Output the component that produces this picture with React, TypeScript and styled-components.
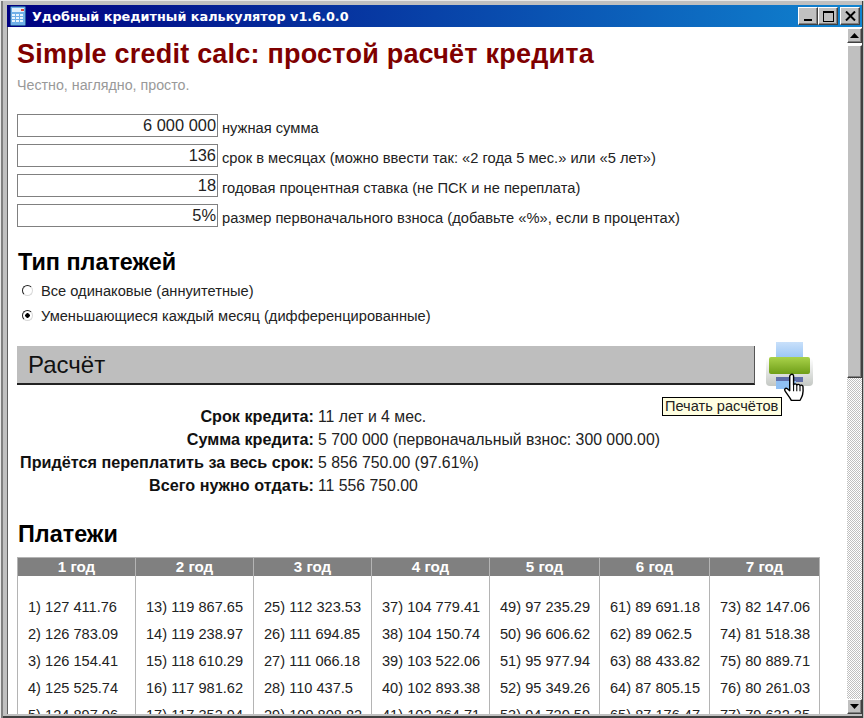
import React from "react"
import styled, { createGlobalStyle } from "styled-components"

const years = [
    { title: "1 год", items: ["1) 127 411.76", "2) 126 783.09", "3) 126 154.41", "4) 125 525.74", "5) 124 897.06"] },
    { title: "2 год", items: ["13) 119 867.65", "14) 119 238.97", "15) 118 610.29", "16) 117 981.62", "17) 117 352.94"] },
    { title: "3 год", items: ["25) 112 323.53", "26) 111 694.85", "27) 111 066.18", "28) 110 437.5", "29) 109 808.82"] },
    { title: "4 год", items: ["37) 104 779.41", "38) 104 150.74", "39) 103 522.06", "40) 102 893.38", "41) 102 264.71"] },
    { title: "5 год", items: ["49) 97 235.29", "50) 96 606.62", "51) 95 977.94", "52) 95 349.26", "53) 94 720.59"] },
    { title: "6 год", items: ["61) 89 691.18", "62) 89 062.5", "63) 88 433.82", "64) 87 805.15", "65) 87 176.47"] },
    { title: "7 год", items: ["73) 82 147.06", "74) 81 518.38", "75) 80 889.71", "76) 80 261.03", "77) 79 632.35"] },
]

const fields = [
    { value: "6 000 000", label: "нужная сумма" },
    { value: "136", label: "срок в месяцах (можно ввести так: «2 года 5 мес.» или «5 лет»)" },
    { value: "18", label: "годовая процентная ставка (не ПСК и не переплата)" },
    { value: "5%", label: "размер первоначального взноса (добавьте «%», если в процентах)" },
]

const summary = [
    { name: "Срок кредита:", value: "11 лет и 4 мес." },
    { name: "Сумма кредита:", value: "5 700 000 (первоначальный взнос: 300 000.00)" },
    { name: "Придётся переплатить за весь срок:", value: "5 856 750.00 (97.61%)" },
    { name: "Всего нужно отдать:", value: "11 556 750.00" },
]

const CalcIcon = () => (
    <svg width="16" height="20" viewBox="0 0 16 20">
        <rect x="0.5" y="0.5" width="15" height="19" rx="1" fill="#6fb0e8" stroke="#2a5f9e" />
        <rect x="2" y="2" width="12" height="4" fill="#dff0fb" />
        <rect x="11" y="3" width="3" height="2" fill="#e04a3a" />
        {[8, 11, 14].map(y => [2, 6, 10].map(x => <rect key={`${x}-${y}`} x={x} y={y} width="3" height="2" fill="#e8f4fc" />))}
    </svg>
)

const PrinterIcon = () => (
    <svg width="50" height="58" viewBox="0 0 50 58">
        <defs>
            <linearGradient id="paper" x1="0" y1="0" x2="0" y2="1">
                <stop offset="0" stopColor="#c9e0fa" />
                <stop offset="1" stopColor="#8fc0f4" />
            </linearGradient>
            <linearGradient id="body" x1="0" y1="0" x2="0" y2="1">
                <stop offset="0" stopColor="#ffffff" />
                <stop offset="1" stopColor="#c4c8c4" />
            </linearGradient>
            <linearGradient id="lid" x1="0" y1="0" x2="0" y2="1">
                <stop offset="0" stopColor="#a9d24a" />
                <stop offset="1" stopColor="#6f9e18" />
            </linearGradient>
        </defs>
        <rect x="12" y="1" width="27" height="20" fill="url(#paper)" />
        <rect x="2" y="17" width="47" height="28" rx="4" fill="url(#body)" />
        <rect x="5" y="16" width="41" height="17" rx="2" fill="url(#lid)" />
        <rect x="12" y="36" width="27" height="5" fill="#5f6ea8" />
        <rect x="12" y="40" width="20" height="8" fill="#8fc0f4" />
    </svg>
)

const HandCursor = () => (
    <svg width="22" height="30" viewBox="0 0 20 28">
        <path
            d="M7 1.500c1.200-.8 2.600 0 2.600 1.400v8.200c.4-1.200 2.600-1.300 3 .2.500-1 2.600-1 3 .5.700-.8 2.600-.5 2.800 1 .2 2.300.2 5-.4 7.500-.5 2-1.500 3.500-2.300 5.200H7.500C6 22.500 3 19 1.500 16.500c-.8-1.400.6-2.900 2-2l2.500 2V3c0-.6.400-1.200 1-1.500z"
            fill="#fff"
            stroke="#000"
            strokeWidth="1.300"
            strokeLinejoin="round"
        />
        <path d="M9.600 11v6M12.600 11.500V17M15.600 12v5" stroke="#000" strokeWidth="1" fill="none" />
    </svg>
)

const App = () => {
    return (
        <>
            <GlobalStyle />
            <Frame>
                <TitleBar>
                    <CalcIcon />
                    <TitleText>Удобный кредитный калькулятор v1.6.0.0</TitleText>
                    <Controls>
                        <ControlButton><MinGlyph /></ControlButton>
                        <ControlButton><MaxGlyph /></ControlButton>
                        <CloseButton>
                            <svg width="11" height="10" viewBox="0 0 11 10">
                                <path d="M1 0.500l9 9M10 0.500l-9 9" stroke="#000" strokeWidth="2" />
                            </svg>
                        </CloseButton>
                    </Controls>
                </TitleBar>
                <Body>
                    <Content>
                        <MainTitle>Simple credit calc: простой расчёт кредита</MainTitle>
                        <Tagline>Честно, наглядно, просто.</Tagline>
                        <Fields>
                            {fields.map(f => (
                                <FieldRow key={f.label}>
                                    <ValueBox>{f.value}</ValueBox>
                                    <FieldLabel>{f.label}</FieldLabel>
                                </FieldRow>
                            ))}
                        </Fields>
                        <SectionTitle>Тип платежей</SectionTitle>
                        <RadioGroup>
                            <RadioRow>
                                <RadioDot />
                                Все одинаковые (аннуитетные)
                            </RadioRow>
                            <RadioRow>
                                <RadioDot $checked />
                                Уменьшающиеся каждый месяц (дифференцированные)
                            </RadioRow>
                        </RadioGroup>
                        <ResultHead>
                            <ResultBar>Расчёт</ResultBar>
                            <PrintBox>
                                <PrinterIcon />
                                <CursorSpot><HandCursor /></CursorSpot>
                                <Tooltip>Печать расчётов</Tooltip>
                            </PrintBox>
                        </ResultHead>
                        <Summary>
                            {summary.map(s => (
                                <React.Fragment key={s.name}>
                                    <SummaryName>{s.name}</SummaryName>
                                    <SummaryValue>{s.value}</SummaryValue>
                                </React.Fragment>
                            ))}
                        </Summary>
                        <PaymentsTitle>Платежи</PaymentsTitle>
                        <Payments>
                            {years.map(y => (
                                <YearColumn key={y.title}>
                                    <YearHead>{y.title}</YearHead>
                                    <YearList>
                                        {y.items.map(i => <PayItem key={i}>{i}</PayItem>)}
                                    </YearList>
                                </YearColumn>
                            ))}
                        </Payments>
                    </Content>
                    <Scrollbar>
                        <ScrollButton>
                            <svg width="9" height="5" viewBox="0 0 9 5"><path d="M4.500 0L9 5H0z" fill="#000" /></svg>
                        </ScrollButton>
                        <ScrollThumb />
                        <ScrollTrack />
                        <ScrollButton>
                            <svg width="9" height="5" viewBox="0 0 9 5"><path d="M0 0h9L4.500 5z" fill="#000" /></svg>
                        </ScrollButton>
                    </Scrollbar>
                </Body>
            </Frame>
        </>
    )
}

const GlobalStyle = createGlobalStyle`
    html, body {
        margin: 0;
        padding: 0;
        height: 718px;
        overflow: hidden;
        background: #c0c0c0;
    }
    body {
        font-family: "Liberation Sans", Arial, sans-serif;
    }
`
const Frame = styled.div`
    box-sizing: border-box;
    width: 864px;
    height: 718px;
    display: flex;
    flex-direction: column;
    background: #c0c0c0;
    padding: 4px 2px 4px 6px;
    border-top: 1px solid #e8e8e8;
    border-left: 1px solid #e8e8e8;
    box-shadow: inset 2px 0 0 #808080, inset -1px 0 0 #c0c0c0, inset -2px 0 0 #404040, inset 0 -2px 0 #404040;
`
const TitleBar = styled.div`
    height: 22px;
    flex: none;
    display: flex;
    align-items: center;
    gap: 6px;
    padding: 0 2px 0 3px;
    background: linear-gradient(90deg, #000080 0%, #1084d0 100%);
`
const TitleText = styled.div`
    color: #fff;
    font-family: "DejaVu Sans", Verdana, sans-serif;
    font-size: 12.8px;
    font-weight: bold;
`
const Controls = styled.div`
    margin-left: auto;
    display: flex;
`
const ControlButton = styled.div`
    box-sizing: border-box;
    width: 20px;
    height: 18px;
    display: flex;
    align-items: center;
    justify-content: center;
    background: #c0c0c0;
    border: 1px solid;
    border-color: #fff #404040 #404040 #fff;
    box-shadow: inset -1px -1px 0 #808080;
`
const CloseButton = styled(ControlButton)`
    margin-left: 2px;
`
const MinGlyph = styled.div`
    width: 8px;
    height: 2px;
    background: #000;
    margin-top: 8px;
`
const MaxGlyph = styled.div`
    box-sizing: border-box;
    width: 11px;
    height: 11px;
    border: 1px solid #000;
    border-top-width: 2px;
`
const Body = styled.div`
    flex: 1;
    min-height: 0;
    display: flex;
    background: #fff;
    box-shadow: inset 1px 0 0 #606060;
`
const Content = styled.div`
    flex: 1;
    min-width: 0;
    overflow: hidden;
    padding: 0 0 0 10px;
    color: #222;
`
const MainTitle = styled.h1`
    margin: 12px 0 0;
    font-size: 27px;
    line-height: 30px;
    font-weight: bold;
    color: #7f0000;
    letter-spacing: 0.22px;
`
const Tagline = styled.div`
    margin-top: 8px;
    font-size: 14.25px;
    line-height: 16px;
    color: #999;
`
const Fields = styled.div`
    margin-top: 21px;
    display: flex;
    flex-direction: column;
    gap: 7px;
`
const FieldRow = styled.div`
    display: flex;
    align-items: flex-end;
    gap: 4px;
`
const ValueBox = styled.div`
    box-sizing: border-box;
    width: 201px;
    height: 23px;
    padding-right: 1px;
    border: 1px solid #808080;
    font-size: 16.4px;
    line-height: 21px;
    text-align: right;
    color: #222;
`
const FieldLabel = styled.div`
    margin-bottom: 1px;
    font-size: 14.7px;
    line-height: 16px;
    color: #222;
`
const SectionTitle = styled.h2`
    margin: 22px 0 0 1px;
    font-size: 23.4px;
    line-height: 26px;
    font-weight: bold;
    color: #000;
`
const RadioGroup = styled.div`
    margin-top: 3px;
`
const RadioRow = styled.div`
    display: flex;
    align-items: center;
    gap: 8px;
    height: 25px;
    padding-left: 5px;
    font-size: 14.65px;
    color: #222;
`
const RadioDot = styled.span<{ $checked?: boolean }>`
    box-sizing: border-box;
    width: 11px;
    height: 11px;
    margin-top: -1px;
    border-radius: 50%;
    border: 1.5px solid;
    border-color: #222 #d8d8d8 #d8d8d8 #222;
    transform: rotate(0deg);
    background: ${p => (p.$checked ? "radial-gradient(circle, #000 0 2px, #fff 2.500px)" : "#fff")};
`
const ResultHead = styled.div`
    margin-top: 18px;
    display: flex;
    align-items: flex-start;
    height: 39px;
`
const ResultBar = styled.div`
    box-sizing: border-box;
    width: 738px;
    height: 39px;
    padding-left: 11px;
    background: #bebebe;
    border-bottom: 2px solid #222;
    border-right: 1px solid #555;
    font-size: 24px;
    line-height: 37px;
    color: #111;
`
const PrintBox = styled.div`
    position: relative;
    margin: -5px 0 0 9px;
`
const CursorSpot = styled.div`
    position: absolute;
    left: 19px;
    top: 32px;
`
const Tooltip = styled.div`
    position: absolute;
    left: -102px;
    top: 56px;
    white-space: nowrap;
    padding: 0 3px 0 2px;
    background: #ffffe1;
    border: 1px solid #000;
    font-size: 14.6px;
    line-height: 17px;
    color: #222;
`
const Summary = styled.div`
    margin: 20px 0 0 3px;
    display: grid;
    grid-template-columns: 294px 1fr;
    column-gap: 4px;
    row-gap: 0;
    font-size: 15.8px;
    line-height: 23px;
`
const SummaryName = styled.div`
    text-align: right;
    font-weight: bold;
    color: #111;
    font-size: 16.2px;
    white-space: nowrap;
`
const SummaryValue = styled.div`
    color: #222;
`
const PaymentsTitle = styled.h2`
    margin: 24px 0 0 1px;
    font-size: 23.4px;
    line-height: 26px;
    font-weight: bold;
    color: #000;
`
const Payments = styled.div`
    margin-top: 10px;
    display: grid;
    grid-template-columns: 118px 118px 118px 118px 110px 110px 110px;
    width: 803px;
    box-sizing: border-box;
    border-left: 1px solid #b4b4b4;
    border-top: 1px solid #b4b4b4;
`
const YearColumn = styled.div`
    box-sizing: border-box;
    border-right: 1px solid #b4b4b4;
`
const YearHead = styled.div`
    height: 18px;
    background: #808080;
    color: #fff;
    font-size: 15.2px;
    font-weight: bold;
    line-height: 17px;
    text-align: center;
`
const YearList = styled.div`
    padding: 18px 0 0 10px;
`
const PayItem = styled.div`
    height: 27px;
    font-size: 14.6px;
    line-height: 27px;
    white-space: nowrap;
    color: #222;
`
const Scrollbar = styled.div`
    flex: none;
    width: 15px;
    padding-top: 1px;
    display: flex;
    flex-direction: column;
    background: #fff;
`
const ScrollButton = styled.div`
    box-sizing: border-box;
    flex: none;
    height: 15px;
    display: flex;
    align-items: center;
    justify-content: center;
    background: #c0c0c0;
    border: 1px solid;
    border-color: #fff #404040 #404040 #fff;
    box-shadow: inset -1px -1px 0 #808080;
`
const ScrollThumb = styled.div`
    box-sizing: border-box;
    flex: none;
    height: 333px;
    margin-top: 2px;
    background: #c0c0c0;
    border: 1px solid;
    border-color: #fff #404040 #404040 #fff;
    box-shadow: inset -1px -1px 0 #808080;
`
const ScrollTrack = styled.div`
    flex: 1;
    background-color: #fff;
    background-image: conic-gradient(#c0c0c0 25%, #fff 0 50%, #c0c0c0 0 75%, #fff 0);
    background-size: 2px 2px;
`
export default App
